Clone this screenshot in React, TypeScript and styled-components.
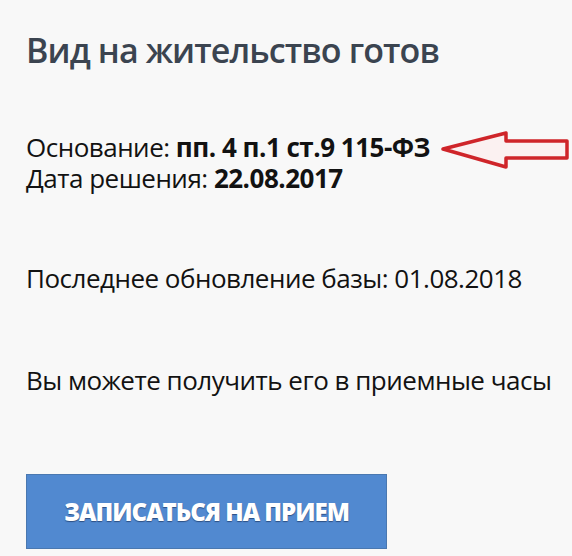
import React from "react";
import styled, { createGlobalStyle } from "styled-components";

const Global = createGlobalStyle`
  html, body { margin: 0; padding: 0; background: #f8f8f8; }
  body { font-family: "Open Sans", "Noto Sans", sans-serif; }
`;

const Card = styled.div`
  position: relative;
  width: 572px;
  height: 556px;
  box-sizing: border-box;
  padding: 30px 0 0 26px;
  display: flex;
  flex-direction: column;
  align-items: flex-start;
  color: #111;
`;

const Title = styled.h1`
  margin: 0;
  font-size: 34px;
  line-height: 40px;
  font-weight: 600;
  color: #3b4450;
  letter-spacing: -0.9px;
`;

const Info = styled.div<{ $mt: number }>`
  margin-top: ${(p) => p.$mt}px;
  font-size: 26px;
  line-height: 31px;
  font-weight: 400;
  letter-spacing: -0.5px;
  color: #121212;
`;

const B = styled.b`
  font-weight: 700;
`;

const Button = styled.button`
  margin-top: 78px;
  width: 361px;
  height: 75px;
  background: #5189d0;
  border: 1px solid #4a78b0;
  color: #fff;
  font-family: "Open Sans", sans-serif;
  font-weight: 800;
  font-size: 24px;
  letter-spacing: -1px;
  text-transform: uppercase;
  text-shadow: 0 1px 1px rgba(20, 40, 80, 0.6);
  padding: 0;
`;

const Arrow = styled.svg`
  position: absolute;
  left: 440px;
  top: 128px;
`;

export default function App() {
  return (
    <>
      <Global />
      <Card>
        <Title>Вид на жительство готов</Title>
        <Info $mt={62}>
          Основание: <B>пп. 4 п.1 ст.9 115-ФЗ</B>
          <br />
          Дата решения: <B>22.08.2017</B>
        </Info>
        <Info $mt={69}>Последнее обновление базы: 01.08.2018</Info>
        <Info $mt={71}>Вы можете получить его в приемные часы</Info>
        <Button>Записаться на прием</Button>
        <Arrow width="132" height="44" viewBox="0 0 132 44">
          <path
            d="M3 21 L66 5 L66 13 L127 13 L127 30 L66 30 L66 39 Z"
            fill="#fbf1f1"
            stroke="#cf252a"
            strokeWidth="3.5"
            strokeLinejoin="round"
          />
        </Arrow>
      </Card>
    </>
  );
}
